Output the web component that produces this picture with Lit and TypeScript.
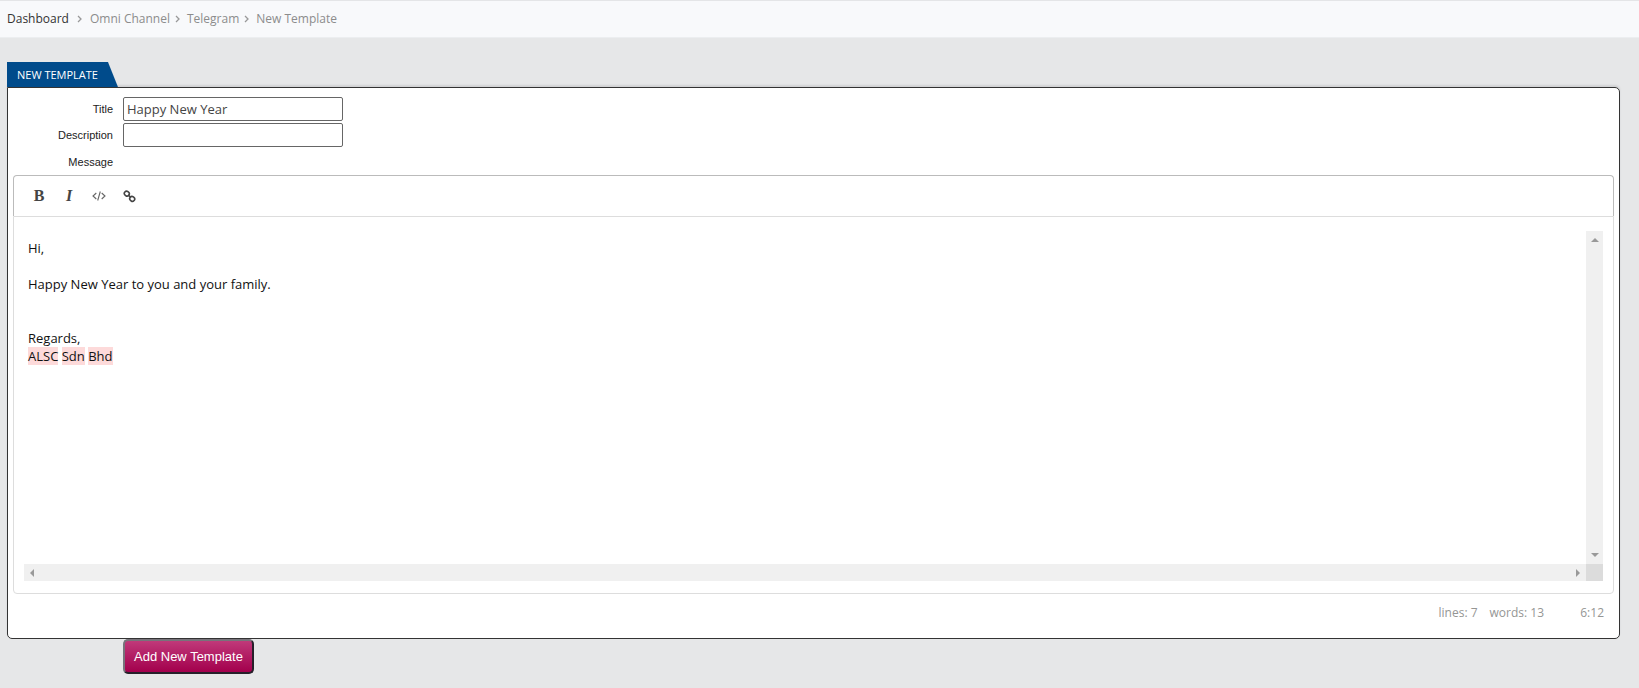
import { LitElement, html, css, svg } from "lit";
import { customElement, property, state } from "lit/decorators.js";

@customElement("bread-crumbs")
class BreadCrumbs extends LitElement {
  @property({ attribute: false }) items: string[] = [];

  static styles = css`
    :host { display: block; }
    .bar {
      display: flex;
      align-items: center;
      box-sizing: border-box;
      height: 38px;
      padding: 0 7px;
      background: #f8f9fb;
      border-top: 1px solid #e4e5e7;
      border-bottom: 1px solid #eceef0;
      font: 12px/18px "Open Sans", sans-serif;
    }
    .crumb { color: #8c8c8c; text-decoration: none; }
    .crumb.first { color: #333; }
    .sep { width: 5px; height: 8px; margin: 0 7px 0 5px; }
    .first + .sep { margin: 0 8px; }
  `;

  render() {
    return html`<nav class="bar" aria-label="Breadcrumb">
      ${this.items.map((item, i) => html`${i ? html`<svg class="sep" viewBox="0 0 5 8"><path d="M1 1l3 3-3 3" fill="none" stroke="#999" stroke-width="1.3" /></svg>` : ""}<a class="crumb ${i ? "" : "first"}" href="#">${item}</a>`)}
    </nav>`;
  }
}

const codeIcon = svg`<svg width="14" height="12" viewBox="0 0 14 12" fill="none" stroke="#666" stroke-width="1.1"><path d="M4.300 3L1 6l3.300 3M9.700 3L13 6l-3.300 3M8.300 1.500L5.700 10.500" /></svg>`;
const linkIcon = svg`<svg width="13" height="13" viewBox="0 0 13 13" fill="none" stroke="#444" stroke-width="1.6"><rect x="1.300" y="1.400" width="5" height="4.400" rx="2.100" transform="rotate(40 3.800 3.600)" /><rect x="6.700" y="6.700" width="5" height="4.400" rx="2.100" transform="rotate(40 9.200 8.900)" /><path d="M5.200 5.200l2.400 2" /></svg>`;

@customElement("message-editor")
class MessageEditor extends LitElement {
  @state() private cursor = "6:12";

  static styles = css`
    :host { display: block; font: 13px/18px "Open Sans", sans-serif; }
    .toolbar {
      display: flex;
      align-items: center;
      box-sizing: border-box;
      height: 41px;
      padding: 0 10px;
      border: 1px solid #bbb;
      border-bottom: 0;
      border-radius: 4px 4px 0 0;
    }
    .tool {
      display: grid;
      place-items: center;
      width: 30px;
      height: 30px;
      padding: 0;
      border: 0;
      background: none;
      color: #444;
      font: bold 16px/18px "Liberation Serif", serif;
    }
    .italic { font-style: italic; }
    .frame {
      display: grid;
      grid-template-columns: 1fr 17px;
      grid-template-rows: 333px 17px;
      padding: 14px 10px 12px;
      border: 1px solid #ddd;
      border-radius: 0 0 4px 4px;
    }
    .text { padding: 8px 4px; color: #111; outline: 0; }
    .line { min-height: 18px; }
    .misspelt { background: #fddada; }
    .track { display: flex; justify-content: space-between; align-items: center; background: #f0f0f0; }
    .across { padding: 0 4px; }
    .down { flex-direction: column; padding: 5px 0; }
    .corner { background: #dcdcdc; }
    .status {
      display: flex;
      justify-content: flex-end;
      padding: 10px 10px 16px;
      color: #959694;
      font-size: 12px;
    }
    .words { margin-left: 12px; }
    .cursor { min-width: 60px; text-align: right; }
  `;

  private arrow(d: string) {
    return html`<svg width="8" height="8" viewBox="0 0 8 8" fill="#999" aria-hidden="true"><path d=${d} /></svg>`;
  }

  render() {
    return html`
      <div class="toolbar" role="toolbar" aria-label="Formatting">
        <button class="tool" aria-label="Bold">B</button>
        <button class="tool italic" aria-label="Italic">I</button>
        <button class="tool" aria-label="Code">${codeIcon}</button>
        <button class="tool" aria-label="Link">${linkIcon}</button>
      </div>
      <div class="frame">
        <div class="text" role="textbox" aria-multiline="true" aria-label="Message" contenteditable="true" spellcheck="false">
          <div class="line">Hi,</div>
          <div class="line"></div>
          <div class="line">Happy New Year to you and your family.</div>
          <div class="line"></div>
          <div class="line"></div>
          <div class="line">Regards,</div>
          <div class="line"><span class="misspelt">ALSC</span> <span class="misspelt">Sdn</span> <span class="misspelt">Bhd</span></div>
        </div>
        <div class="track down">${this.arrow("M0 6l4-4 4 4z")}${this.arrow("M0 2l4 4 4-4z")}</div>
        <div class="track across">${this.arrow("M6 0L2 4l4 4z")}${this.arrow("M2 0l4 4-4 4z")}</div>
        <div class="corner"></div>
      </div>
      <div class="status">
        <span>lines: 7</span><span class="words">words: 13</span><span class="cursor">${this.cursor}</span>
      </div>
    `;
  }
}

@customElement("app-root")
class AppRoot extends LitElement {
  private crumbs = ["Dashboard", "Omni Channel", "Telegram", "New Template"];

  static styles = css`
    :host {
      display: block;
      min-height: 100vh;
      background: #e6e7e8;
      font: 11px/16px "Liberation Sans", Arial, sans-serif;
      color: #222;
    }
    .page { padding: 24px 19px 0 7px; }
    .tab {
      box-sizing: border-box;
      width: max-content;
      height: 25px;
      margin: 0;
      padding: 0 20px 0 10px;
      background: #004b8b;
      color: #fff;
      clip-path: polygon(0 0, calc(100% - 10px) 0, 100% 100%, 0 100%);
      font: 500 11px/26px "Open Sans", sans-serif;
    }
    .panel {
      padding: 9px 5px 0;
      border: 1px solid #333;
      border-radius: 0 5px 5px 5px;
      background: #fff;
      box-shadow: 0 -2px 2px #d0d1d3;
    }
    .row {
      display: grid;
      grid-template-columns: 100px 220px;
      column-gap: 10px;
      align-items: center;
      margin-bottom: 2px;
    }
    .label { text-align: right; }
    .field {
      box-sizing: border-box;
      width: 100%;
      height: 24px;
      padding: 0 3px;
      border: 1px solid #666;
      border-radius: 2px;
      background: #fff;
      color: #444;
      font: 13px/18px "Open Sans", sans-serif;
    }
    .message { min-height: 26px; margin: 0; }
    .submit {
      display: block;
      height: 35px;
      margin: 0 0 0 116px;
      padding: 0 9px;
      border: 2px solid;
      border-color: #77737a #26202a #26202a #77737a;
      border-radius: 5px;
      background: linear-gradient(#c0397a, #a3004c);
      color: #fff;
      font: 13px/18px "Liberation Sans", Arial, sans-serif;
    }
  `;

  render() {
    return html`
      <bread-crumbs .items=${this.crumbs}></bread-crumbs>
      <main class="page">
        <h1 class="tab">NEW TEMPLATE</h1>
        <section class="panel">
          <div class="row">
            <label class="label" for="title">Title</label>
            <input class="field" id="title" type="text" value="Happy New Year" />
          </div>
          <div class="row">
            <label class="label" for="description">Description</label>
            <input class="field" id="description" type="text" />
          </div>
          <div class="row message"><span class="label">Message</span></div>
          <message-editor></message-editor>
        </section>
        <button class="submit" type="submit">Add New Template</button>
      </main>
    `;
  }
}
